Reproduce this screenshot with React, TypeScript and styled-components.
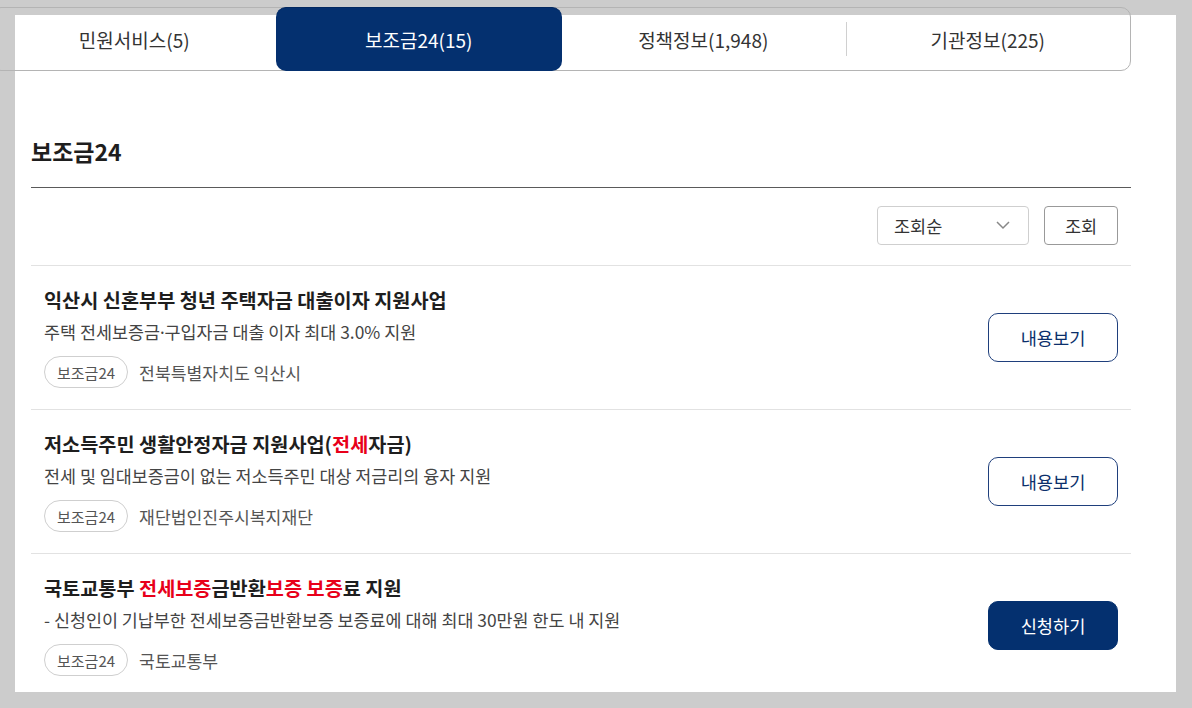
import React from "react";
import styled, { createGlobalStyle } from "styled-components";

const GlobalStyle = createGlobalStyle`
  html, body {
    margin: 0;
    padding: 0;
    background: #cccccc;
    font-family: "Noto Sans CJK KR", "Noto Sans", sans-serif;
    color: #222;
    overflow: hidden;
  }
  * { box-sizing: border-box; }
`;

const NAVY = "#04306f";
const RED = "#e8001a";

const Panel = styled.div`
  display: flow-root;
  margin: 15px 0 0 15px;
  width: 1161px;
  height: 677px;
  background: #fff;
`;

const Tabs = styled.div`
  display: grid;
  grid-template-columns: repeat(4, 1fr);
  margin: -8px 0 0 -24px;
  width: 1140px;
  height: 64px;
  border: 1px solid #b4b4b4;
  border-radius: 10px;
  position: relative;
`;

const Tab = styled.div<{ $active?: boolean; $sep?: boolean }>`
  display: flex;
  align-items: center;
  justify-content: center;
  font-size: 19px;
  color: ${(p) => (p.$active ? "#fff" : "#333")};
  background: ${(p) => (p.$active ? NAVY : "transparent")};
  border-radius: ${(p) => (p.$active ? "10px" : "0")};
  margin: ${(p) => (p.$active ? "-1px -1px" : "0")};
  border-top: ${(p) => (p.$active ? "1px solid #022860" : "none")};
  position: relative;
  &::before {
    content: "";
    display: ${(p) => (p.$sep ? "block" : "none")};
    position: absolute;
    left: 0;
    top: 14px;
    bottom: 14px;
    width: 1px;
    background: #d0d0d0;
  }
`;

const Content = styled.div`
  margin-left: 16px;
  width: 1100px;
`;

const TitleBar = styled.h2`
  margin: 64px 0 0;
  padding: 0 0 20px;
  font-size: 23px;
  line-height: 32px;
  font-weight: 700;
  color: #1e1e1e;
  border-bottom: 1px solid #5a5a5a;
`;

const Toolbar = styled.div`
  display: flex;
  justify-content: flex-end;
  gap: 15px;
  padding: 18px 13px 20px 0;
`;

const Select = styled.div`
  display: flex;
  align-items: center;
  justify-content: space-between;
  width: 152px;
  height: 39px;
  padding: 0 18px 0 16px;
  border: 1px solid #cfcfcf;
  border-radius: 4px;
  font-size: 17.5px;
  color: #333;
`;

const SearchButton = styled.button`
  width: 74px;
  height: 39px;
  border: 1px solid #999;
  border-radius: 4px;
  background: #fff;
  font-family: inherit;
  font-size: 17.5px;
  color: #333;
  padding: 0;
`;

const List = styled.ul`
  list-style: none;
  margin: 0;
  padding: 0;
  border-top: 1px solid #e2e2e2;
`;

const Item = styled.li`
  display: flex;
  align-items: center;
  justify-content: space-between;
  padding: 20px 13px 21px 13px;
  border-bottom: 1px solid #e2e2e2;
`;

const Info = styled.div`
  display: flex;
  flex-direction: column;
`;

const ItemTitle = styled.div`
  font-size: 19.7px;
  line-height: 28px;
  font-weight: 700;
  color: #1e1e1e;
`;

const Red = styled.span`
  color: ${RED};
`;

const ItemDesc = styled.div`
  margin-top: 6px;
  font-size: 17.4px;
  line-height: 24px;
  color: #444;
`;

const Dot = styled.span`
  font-family: "Noto Sans", sans-serif;
`;

const Meta = styled.div`
  display: flex;
  align-items: center;
  gap: 11px;
  margin-top: 12px;
`;

const Pill = styled.span`
  display: inline-flex;
  align-items: center;
  height: 32px;
  padding: 0 12px;
  border: 1px solid #cfcfcf;
  border-radius: 16px;
  font-size: 15px;
  color: #555;
`;

const Org = styled.span`
  font-size: 17.2px;
  color: #555;
`;

const ActionButton = styled.button<{ $primary?: boolean }>`
  width: 130px;
  height: 49px;
  border-radius: 10px;
  border: 1px solid ${(p) => (p.$primary ? NAVY : "#1f3f7c")};
  background: ${(p) => (p.$primary ? NAVY : "#fff")};
  color: ${(p) => (p.$primary ? "#fff" : "#0b2f6b")};
  font-family: inherit;
  font-size: 17.6px;
  padding: 0;
  flex-shrink: 0;
`;

const Chevron = () => (
  <svg width="14" height="9" viewBox="0 0 14 9" fill="none">
    <polyline points="1,1 7,7 13,1" stroke="#888" strokeWidth="1.5" />
  </svg>
);

type Entry = {
  title: React.ReactNode;
  desc: React.ReactNode;
  org: string;
  primary?: boolean;
  label: string;
};

const entries: Entry[] = [
  {
    title: "익산시 신혼부부 청년 주택자금 대출이자 지원사업",
    desc: (
      <>
        주택 전세보증금<Dot>·</Dot>구입자금 대출 이자 최대 3.0% 지원
      </>
    ),
    org: "전북특별자치도 익산시",
    label: "내용보기",
  },
  {
    title: (
      <>
        저소득주민 생활안정자금 지원사업(<Red>전세</Red>자금)
      </>
    ),
    desc: "전세 및 임대보증금이 없는 저소득주민 대상 저금리의 융자 지원",
    org: "재단법인진주시복지재단",
    label: "내용보기",
  },
  {
    title: (
      <>
        국토교통부 <Red>전세보증</Red>금반환<Red>보증 보증</Red>료 지원
      </>
    ),
    desc: "- 신청인이 기납부한 전세보증금반환보증 보증료에 대해 최대 30만원 한도 내 지원",
    org: "국토교통부",
    label: "신청하기",
    primary: true,
  },
];

const tabs = ["민원서비스(5)", "보조금24(15)", "정책정보(1,948)", "기관정보(225)"];
const activeTab = 1;

export default function App() {
  return (
    <>
      <GlobalStyle />
      <Panel>
        <Tabs>
          {tabs.map((t, i) => (
            <Tab
              key={t}
              $active={i === activeTab}
              $sep={i > 0 && i !== activeTab && i - 1 !== activeTab}
            >
              {t}
            </Tab>
          ))}
        </Tabs>
        <Content>
          <TitleBar>보조금24</TitleBar>
          <Toolbar>
            <Select>
              <span>조회순</span>
              <Chevron />
            </Select>
            <SearchButton>조회</SearchButton>
          </Toolbar>
          <List>
            {entries.map((e, i) => (
              <Item key={i}>
                <Info>
                  <ItemTitle>{e.title}</ItemTitle>
                  <ItemDesc>{e.desc}</ItemDesc>
                  <Meta>
                    <Pill>보조금24</Pill>
                    <Org>{e.org}</Org>
                  </Meta>
                </Info>
                <ActionButton $primary={e.primary}>{e.label}</ActionButton>
              </Item>
            ))}
          </List>
        </Content>
      </Panel>
    </>
  );
}
